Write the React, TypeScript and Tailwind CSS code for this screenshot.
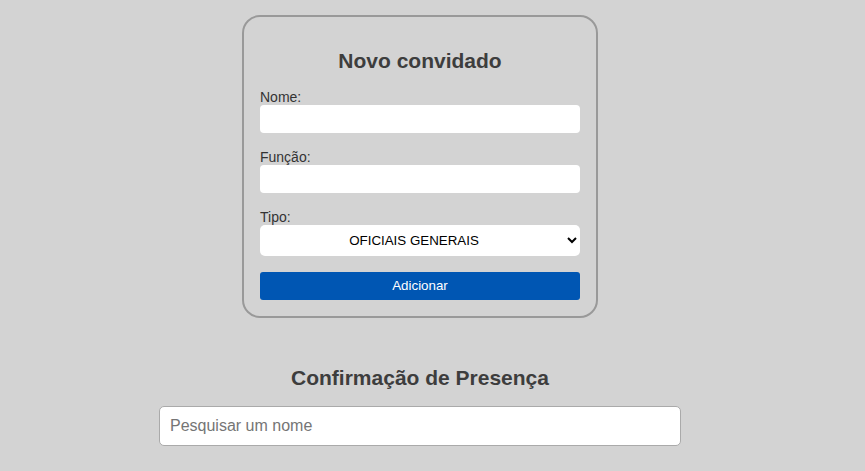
import React from 'react';

const App: React.FC = () => {
  return (
    <div
      className="min-h-screen bg-[#d3d3d3] flex flex-col items-center pr-[25px] text-[#333]"
      style={{ fontFamily: '"Liberation Sans", Arial, sans-serif' }}
    >
      {/* Novo convidado */}
      <form className="mt-[15px] w-[356px] border-2 border-[#999] rounded-[18px] px-4 pt-[15px] pb-[16px]">
        <h2 className="mt-[17px] mb-4 text-center text-[21px] leading-[24px] font-bold text-[#3d3d3d]">
          Novo convidado
        </h2>

        <label className="block text-sm leading-4">Nome:</label>
        <input type="text" className="block w-full h-7 bg-white rounded-[4px] px-2 text-sm outline-none" />

        <label className="block mt-4 text-sm leading-4">Função:</label>
        <input type="text" className="block w-full h-7 bg-white rounded-[4px] px-2 text-sm outline-none" />

        <label className="block mt-4 text-sm leading-4">Tipo:</label>
        <select className="block w-full h-[31px] bg-white rounded-[5px] text-[13.33px] text-black text-center outline-none">
          <option>OFICIAIS GENERAIS</option>
        </select>

        <button
          type="button"
          className="block w-full h-7 mt-4 bg-[#0056b3] text-white text-[13.33px] rounded-[3px]"
        >
          Adicionar
        </button>
      </form>

      {/* Confirmação */}
      <h2 className="mt-[48px] text-center text-[21px] leading-[24px] font-bold text-[#3d3d3d]">
        Confirmação de Presença
      </h2>
      <input
        type="text"
        placeholder="Pesquisar um nome"
        className="mt-4 w-[522px] h-10 bg-white border border-[#aaa] rounded-[5px] px-[10px] text-base placeholder:text-[#757575] outline-none"
      />
    </div>
  );
};

export default App;
